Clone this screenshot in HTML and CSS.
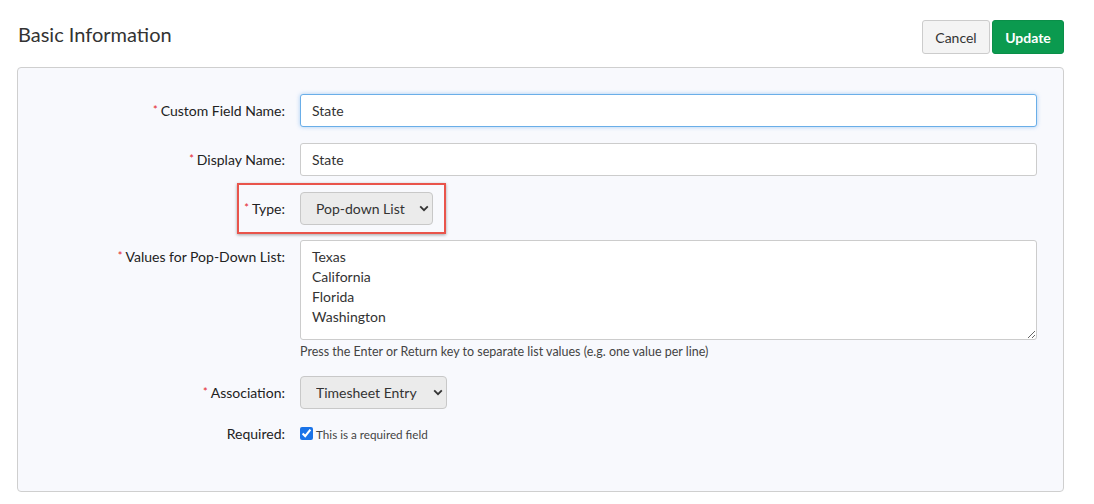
FILE: index.html
```html
<!DOCTYPE html>
<html lang="en">
<head>
    <meta charset="UTF-8">
    <meta name="viewport" content="width=device-width, initial-scale=1.0">
    <title>Basic Information</title>

    <link rel="stylesheet" href="styles.css">
</head>
<body>

    <div class="header">
        <h1>Basic Information</h1>
        <div class="actions">
            <button class="btn btn-cancel">Cancel</button>
            <button class="btn btn-update">Update</button>
        </div>
    </div>

    <div class="panel">
        <div class="row">
            <label class="lbl"><span class="req">*</span>Custom Field Name:</label>
            <input class="text focused" type="text" value="State">
        </div>
        <div class="row">
            <label class="lbl"><span class="req">*</span>Display Name:</label>
            <input class="text" type="text" value="State">
        </div>
        <div class="row type-row">
            <div class="highlight"></div>
            <label class="lbl"><span class="req">*</span>Type:</label>
            <div class="select type-select">
                <select><option>Pop-down List</option></select>
                <svg class="chev" width="10" height="7" viewBox="0 0 10 7"><path d="M1.2 1.4 L5 5.2 L8.8 1.4" fill="none" stroke="#333" stroke-width="1.8"/></svg>
            </div>
        </div>
        <div class="row top">
            <label class="lbl"><span class="req">*</span>Values for Pop-Down List:</label>
            <div class="field">
                <textarea class="area">Texas
California
Florida
Washington</textarea>
                <div class="help">Press the Enter or Return key to separate list values (e.g. one value per line)</div>
            </div>
        </div>
        <div class="row">
            <label class="lbl"><span class="req">*</span>Association:</label>
            <div class="select assoc-select">
                <select><option>Timesheet Entry</option></select>
                <svg class="chev" width="10" height="7" viewBox="0 0 10 7"><path d="M1.2 1.4 L5 5.2 L8.8 1.4" fill="none" stroke="#333" stroke-width="1.8"/></svg>
            </div>
        </div>
        <div class="row check-row">
            <label class="lbl">Required:</label>
            <label class="check"><input type="checkbox" checked>This is a required field</label>
        </div>
    </div>

</body>
</html>
```

FILE: styles.css
```css
body {
    font-family: Lato, "Open Sans", sans-serif;
    margin: 0;
    padding: 20px 30px 0 17px;
    background-color: #fff;
    color: #222;
}
.header {
    display: flex;
    justify-content: space-between;
    align-items: flex-start;
    height: 47px;
}
h1 {
    font-size: 20px;
    font-weight: 400;
    color: #333;
    margin: 2px 0 0 1px;
}
.actions {
    display: flex;
    gap: 2px;
}
.btn {
    font-family: Lato, sans-serif;
    font-size: 14px;
    height: 34px;
    padding: 0 12px;
    border-radius: 3px;
    cursor: pointer;
}
.btn-cancel {
    background-color: #f4f4f4;
    border: 1px solid #ccc;
    color: #333;
    width: 68px;
}
.btn-update {
    background-color: #0b9a4f;
    border: 1px solid #0a8f49;
    color: #fff;
    font-weight: 700;
    width: 72px;
}
.panel {
    border: 1px solid #cfcfcf;
    border-radius: 4px;
    background-color: #f8f9fd;
    padding: 26px 26px 49px 0;
    height: 348px;
}
.row {
    display: grid;
    grid-template-columns: 267px 1fr;
    column-gap: 15px;
    align-items: center;
    margin-bottom: 16px;
    position: relative;
}
.row.type-row {
    margin-bottom: 15px;
}
.row.top {
    align-items: start;
    margin-bottom: 14px;
}
.row.top .lbl {
    padding-top: 8px;
}
.lbl {
    text-align: right;
    font-size: 14px;
    color: #222;
}
.req {
    color: #e4232a;
    font-size: 11px;
    margin-right: 3px;
    vertical-align: 2px;
}
.text {
    font-family: Lato, sans-serif;
    font-size: 14px;
    color: #333;
    height: 33px;
    box-sizing: border-box;
    border: 1px solid #ccc;
    border-radius: 3px;
    padding: 0 11px;
    background-color: #fff;
}
.text.focused {
    border-color: #6aaee8;
    box-shadow: 0 0 4px rgba(70, 150, 230, 0.45);
    outline: none;
}
.select {
    position: relative;
}
.select select {
    appearance: none;
    font-family: Lato, sans-serif;
    font-size: 14px;
    color: #333;
    height: 33px;
    border: 1px solid #c8c8c8;
    border-radius: 4px;
    background-color: #ebebeb;
    padding: 0 16px 0 15px;
}
.type-select select {
    width: 133px;
}
.assoc-select select {
    width: 147px;
}
.chev {
    position: absolute;
    top: 13px;
}
.type-select .chev {
    left: 119px;
}
.assoc-select .chev {
    left: 133px;
}
.highlight {
    position: absolute;
    left: 219px;
    top: -9px;
    width: 205px;
    height: 47px;
    border: 2px solid #e9544b;
    box-shadow: 0 1px 3px rgba(0, 0, 0, 0.35);
}
.area {
    display: block;
    width: 100%;
    height: 100px;
    box-sizing: border-box;
    font-family: Lato, sans-serif;
    font-size: 14px;
    line-height: 20px;
    color: #333;
    border: 1px solid #ccc;
    border-radius: 3px;
    padding: 6px 11px;
    background-color: #fff;
}
.help {
    font-size: 12.5px;
    color: #444;
    margin-top: 4px;
    margin-bottom: 3px;
}
.check-row {
    margin-top: 2px;
}
.check {
    display: flex;
    align-items: center;
    font-size: 11.7px;
    color: #444;
}
.check input {
    margin: 0 3px 0 0;
    width: 13px;
    height: 13px;
    accent-color: #1a73e8;
}
```
